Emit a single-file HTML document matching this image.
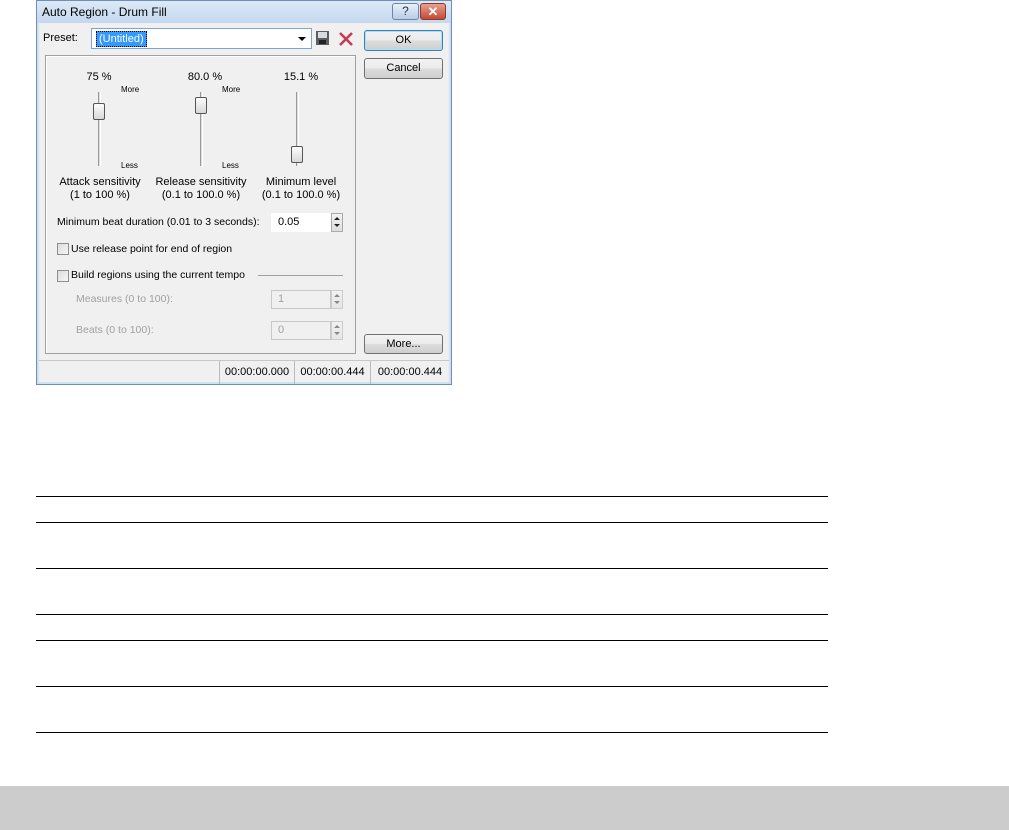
<!DOCTYPE html>
<html><head><style>
*{box-sizing:border-box;margin:0;padding:0}
body{width:1009px;height:830px;background:#fff;position:relative;overflow:hidden;font-family:"Liberation Sans",sans-serif;font-size:11px;color:#000}
.a{position:absolute}
.btn{position:absolute;border:1px solid #707070;border-radius:3px;background:linear-gradient(#f2f2f2,#ebebeb 50%,#dddddd 51%,#cfcfcf);text-align:center;line-height:18px;font-size:11px}
.hl{position:absolute;left:36px;width:792px;height:1px;background:#000}
.thumb{position:absolute;width:12px;height:17px;border:1px solid #555;border-radius:2px;background:linear-gradient(#fdfdfd,#d8d8d8)}
.track{position:absolute;width:3px;border-left:1px solid #999;border-right:1px solid #fff;background:#ddd}
.c{position:absolute;text-align:center;width:120px}
.cb{position:absolute;width:12px;height:12px;border:1px solid #8e8f8f;background:linear-gradient(135deg,#dcdcdc,#f6f6f6)}
.inp{position:absolute;height:19px;border:1px solid #abadb3;background:#fff;padding-left:6px;line-height:17px}
.spin{position:absolute;width:12px;height:19px;border:1px solid #aaa;background:linear-gradient(#f4f4f4,#ddd)}
.spin:before{content:"";position:absolute;left:2px;top:3px;border-left:3px solid transparent;border-right:3px solid transparent;border-bottom:3px solid #222}
.spin:after{content:"";position:absolute;left:2px;top:10px;border-left:3px solid transparent;border-right:3px solid transparent;border-top:3px solid #222}
.sb{position:absolute;top:361px;height:23px;border-left:1px solid #bbb;line-height:22px;text-align:center}
</style></head><body>
<div class="a" style="left:36px;top:0;width:416px;height:385px;background:#cfe0f3;border:1px solid #6f8fb3"></div>
<div class="a" style="left:37px;top:1px;width:414px;height:22px;background:linear-gradient(#dce9f7,#c4d7ee)"></div>
<div class="a" style="left:42px;top:5px;font-size:12px">Auto Region - Drum Fill</div>
<div class="a" style="left:392px;top:3px;width:27px;height:17px;border:1px solid #6d86a6;border-radius:3px;background:linear-gradient(#e8f0fa,#b9cde6);text-align:center;font-size:12px;line-height:15px;color:#334">?</div>
<div class="a" style="left:420px;top:3px;width:26px;height:17px;border:1px solid #8a3a2e;border-radius:3px;background:linear-gradient(#e8a08f,#c24a34);color:#fff;text-align:center;font-weight:bold;font-size:13px;line-height:15px">✕</div>
<div class="a" style="left:39px;top:23px;width:410px;height:359px;background:#f0f0f0"></div>
<div class="a" style="left:43px;top:32px">Preset:</div>
<div class="a" style="left:91px;top:28px;width:221px;height:21px;border:1px solid #7ea3cf;background:#fff"></div>
<div class="a" style="left:96px;top:31px;background:#3399ff;color:#fff;padding:0 2px;line-height:14px;border:1px dotted #000">(Untitled)</div>
<div class="a" style="left:298px;top:37px;width:0;height:0;border-left:4px solid transparent;border-right:4px solid transparent;border-top:4px solid #000"></div>
<svg class="a" style="left:315px;top:30px" width="16" height="16"><rect x="1" y="1" width="13" height="14" fill="#5a5e63"/><rect x="3" y="2" width="9" height="6" fill="#d8dbde"/><rect x="4" y="10" width="7" height="4" fill="#222"/></svg>
<svg class="a" style="left:338px;top:31px" width="16" height="16"><path d="M2 2L14 14M14 2L2 14" stroke="#c43b5a" stroke-width="2.6"/></svg>
<div class="btn" style="left:364px;top:30px;width:79px;height:21px;border-color:#3c7fb1;box-shadow:inset 0 0 0 1px #a6e1f8;line-height:19px">OK</div>
<div class="btn" style="left:364px;top:58px;width:79px;height:21px;line-height:19px">Cancel</div>
<div class="btn" style="left:364px;top:334px;width:79px;height:20px">More...</div>
<div class="a" style="left:45px;top:55px;width:311px;height:299px;border:1px solid #a0a0a0;box-shadow:1px 1px 0 #fff inset"></div>
<div class="c" style="left:39px;top:71px">75 %</div>
<div class="c" style="left:145px;top:71px">80.0 %</div>
<div class="c" style="left:241px;top:71px">15.1 %</div>
<div class="a" style="left:121px;top:85px;font-size:8px">More</div>
<div class="a" style="left:222px;top:85px;font-size:8px">More</div>
<div class="a" style="left:121px;top:161px;font-size:8px">Less</div>
<div class="a" style="left:222px;top:161px;font-size:8px">Less</div>
<div class="track" style="left:98px;top:92px;height:74px"></div>
<div class="track" style="left:200px;top:92px;height:74px"></div>
<div class="track" style="left:296px;top:92px;height:74px"></div>
<div class="thumb" style="left:93px;top:103px"></div>
<div class="thumb" style="left:195px;top:97px"></div>
<div class="thumb" style="left:291px;top:146px"></div>
<div class="c" style="left:40px;top:176px;line-height:13px">Attack sensitivity<br>(1 to 100 %)</div>
<div class="c" style="left:141px;top:176px;line-height:13px">Release sensitivity<br>(0.1 to 100.0 %)</div>
<div class="c" style="left:241px;top:176px;line-height:13px">Minimum level<br>(0.1 to 100.0 %)</div>
<div class="a" style="left:57px;top:216px;font-size:10.5px">Minimum beat duration (0.01 to 3 seconds):</div>
<div class="inp" style="left:271px;top:213px;width:60px;border-color:#fff">0.05</div>
<div class="spin" style="left:331px;top:213px"></div>
<div class="cb" style="left:57px;top:243px"></div>
<div class="a" style="left:71px;top:243px;font-size:10.5px">Use release point for end of region</div>
<div class="cb" style="left:57px;top:270px"></div>
<div class="a" style="left:71px;top:269px;font-size:10.5px">Build regions using the current tempo</div>
<div class="a" style="left:258px;top:275px;width:85px;height:1px;background:#a0a0a0"></div>
<div class="a" style="left:76px;top:293px;color:#a0a0a0;font-size:10.5px">Measures (0 to 100):</div>
<div class="inp" style="left:271px;top:290px;width:60px;color:#a0a0a0;background:#f0f0f0;border-color:#c8c8c8">1</div>
<div class="spin" style="left:331px;top:290px;opacity:.5"></div>
<div class="a" style="left:76px;top:324px;color:#a0a0a0;font-size:10.5px">Beats (0 to 100):</div>
<div class="inp" style="left:271px;top:321px;width:60px;color:#a0a0a0;background:#f0f0f0;border-color:#c8c8c8">0</div>
<div class="spin" style="left:331px;top:321px;opacity:.5"></div>
<div class="a" style="left:39px;top:360px;width:410px;height:1px;background:#c8c8c8"></div>
<div class="sb" style="left:219px;width:75px">00:00:00.000</div>
<div class="sb" style="left:294px;width:76px">00:00:00.444</div>
<div class="sb" style="left:370px;width:79px">00:00:00.444</div>
<div class="hl" style="top:496px"></div>
<div class="hl" style="top:522px"></div>
<div class="hl" style="top:568px"></div>
<div class="hl" style="top:614px"></div>
<div class="hl" style="top:640px"></div>
<div class="hl" style="top:686px"></div>
<div class="hl" style="top:732px"></div>
<div class="a" style="left:0;top:786px;width:1009px;height:44px;background:#cccccc"></div>
</body></html>
